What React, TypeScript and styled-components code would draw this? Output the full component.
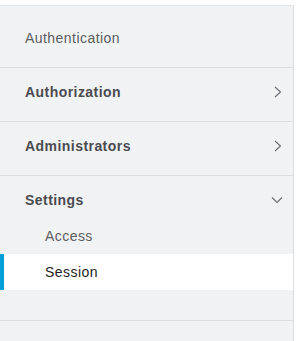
import React from "react";
import styled, { createGlobalStyle } from "styled-components";

const GlobalStyle = createGlobalStyle`
  html, body {
    margin: 0;
    padding: 0;
    background: #ffffff;
  }
  body {
    font-family: "Liberation Sans", Arial, sans-serif;
  }
`;

const Page = styled.div`
  padding-top: 5px;
  width: 296px;
  height: 341px;
  box-sizing: border-box;
  background: #ffffff;
`;

const Panel = styled.nav`
  width: 294px;
  height: 336px;
  box-sizing: border-box;
  background: #f1f2f4;
  border-top: 1px solid #e4e5e7;
  border-right: 1px solid #dcdde0;
  padding-top: 8px;
`;

const Section = styled.div<{ $last?: boolean }>`
  border-bottom: 1px solid #dcdde0;
  padding-bottom: ${(p) => (p.$last ? "30px" : "0")};
`;

const Header = styled.div<{ $bold?: boolean }>`
  height: 53px;
  box-sizing: border-box;
  display: flex;
  align-items: center;
  justify-content: space-between;
  padding: 0 10px 5px 25px;
  font-size: 14px;
  letter-spacing: 0.45px;
  font-weight: ${(p) => (p.$bold ? 700 : 400)};
  color: ${(p) => (p.$bold ? "#4b4b50" : "#5c5c61")};
`;

const SubItem = styled.div<{ $active?: boolean }>`
  height: 36px;
  display: flex;
  align-items: center;
  padding-left: 45px;
  font-size: 14px;
  letter-spacing: 0.45px;
  color: ${(p) => (p.$active ? "#1e1e22" : "#5c5c61")};
  background: ${(p) => (p.$active ? "#ffffff" : "transparent")};
  box-shadow: ${(p) => (p.$active ? "inset 4px 0 0 #049fd9" : "none")};
`;

const SubList = styled.div`
  margin-top: -11px;
`;

const Chevron = ({ dir }: { dir: "right" | "down" }) => (
  <svg width="12" height="12" viewBox="0 0 12 12" fill="none">
    <path
      d={dir === "right" ? "M4 1 L9.5 6 L4 11" : "M1 3.5 L6 8.5 L11 3.5"}
      stroke="#6a6a70"
      strokeWidth="1.1"
    />
  </svg>
);

export default function App() {
  return (
    <Page>
      <GlobalStyle />
      <Panel>
        <Section>
          <Header>Authentication</Header>
        </Section>
        <Section>
          <Header $bold>
            Authorization
            <Chevron dir="right" />
          </Header>
        </Section>
        <Section>
          <Header $bold>
            Administrators
            <Chevron dir="right" />
          </Header>
        </Section>
        <Section $last>
          <Header $bold>
            Settings
            <Chevron dir="down" />
          </Header>
          <SubList>
            <SubItem>Access</SubItem>
            <SubItem $active>Session</SubItem>
          </SubList>
        </Section>
      </Panel>
    </Page>
  );
}
